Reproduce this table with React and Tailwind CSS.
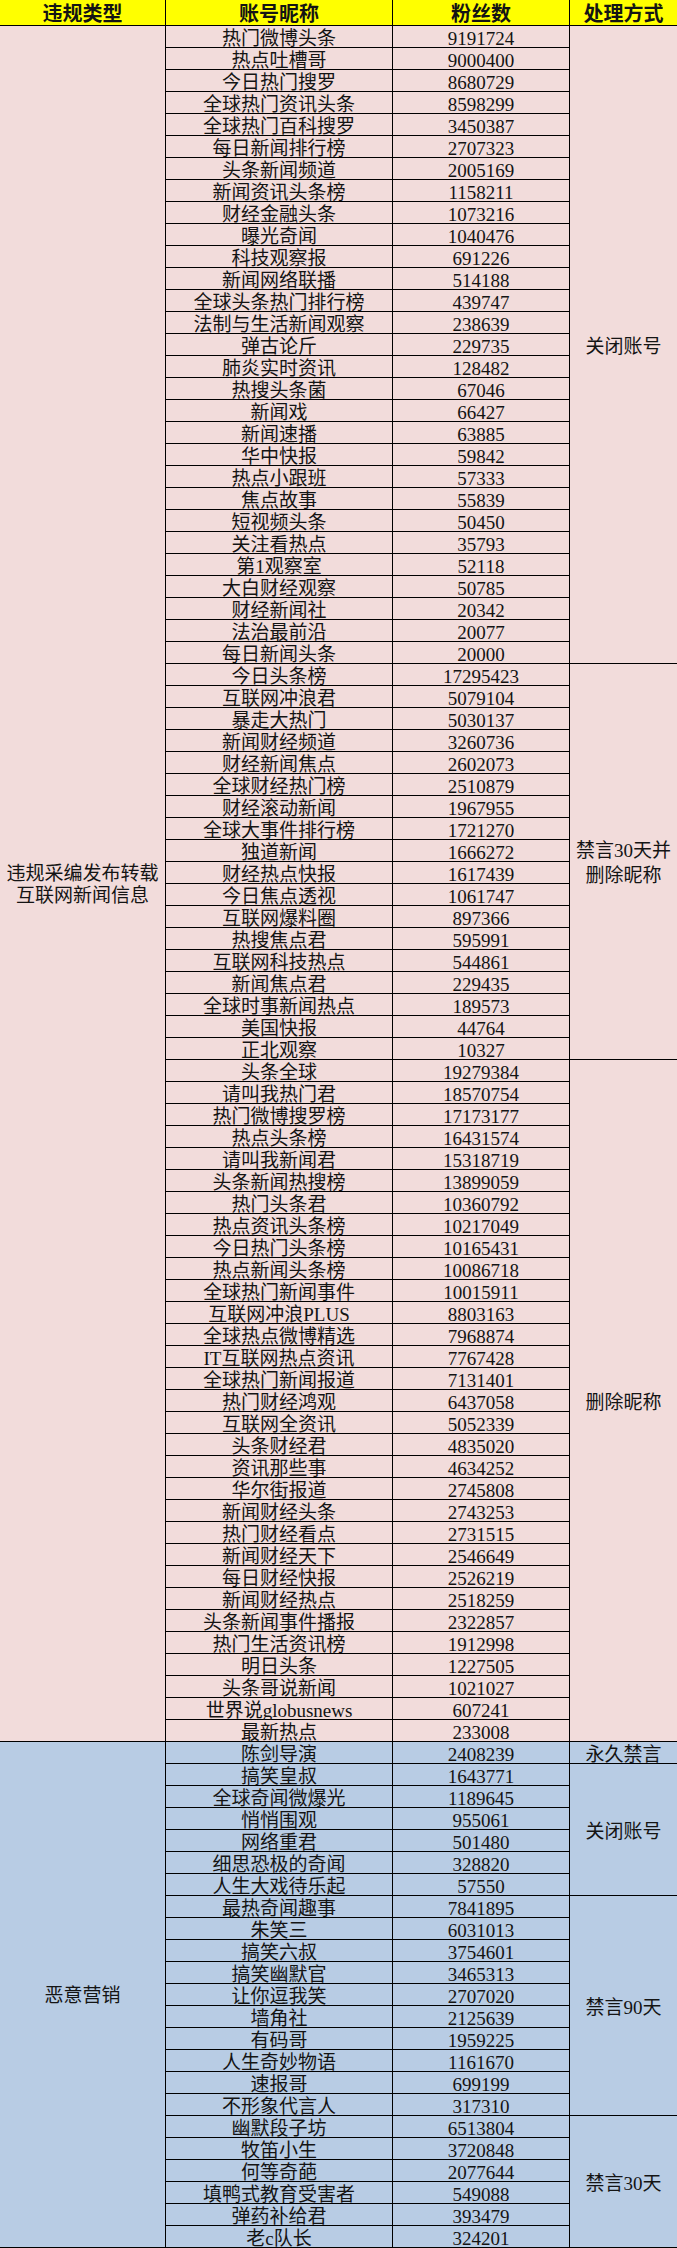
import React from "react";

const PINK = "bg-[#f2dcdb]";
const BLUE = "bg-[#b8cce4]";

// full class names so tailwind can see them
const SPAN = {
    1: "row-span-1",
    6: "row-span-6",
    10: "row-span-10",
    18: "row-span-18",
    23: "row-span-23",
    29: "row-span-29",
    31: "row-span-31",
    78: "row-span-78",
};

const sections = [
    {
        type: ["违规采编发布转载", "互联网新闻信息"],
        bg: PINK,
        groups: [
            {
                action: ["关闭账号"],
                rows: [
                    ["热门微博头条", "9191724"],
                    ["热点吐槽哥", "9000400"],
                    ["今日热门搜罗", "8680729"],
                    ["全球热门资讯头条", "8598299"],
                    ["全球热门百科搜罗", "3450387"],
                    ["每日新闻排行榜", "2707323"],
                    ["头条新闻频道", "2005169"],
                    ["新闻资讯头条榜", "1158211"],
                    ["财经金融头条", "1073216"],
                    ["曝光奇闻", "1040476"],
                    ["科技观察报", "691226"],
                    ["新闻网络联播", "514188"],
                    ["全球头条热门排行榜", "439747"],
                    ["法制与生活新闻观察", "238639"],
                    ["弹古论斤", "229735"],
                    ["肺炎实时资讯", "128482"],
                    ["热搜头条菌", "67046"],
                    ["新闻戏", "66427"],
                    ["新闻速播", "63885"],
                    ["华中快报", "59842"],
                    ["热点小跟班", "57333"],
                    ["焦点故事", "55839"],
                    ["短视频头条", "50450"],
                    ["关注看热点", "35793"],
                    ["第1观察室", "52118"],
                    ["大白财经观察", "50785"],
                    ["财经新闻社", "20342"],
                    ["法治最前沿", "20077"],
                    ["每日新闻头条", "20000"],
                ],
            },
            {
                action: ["禁言30天并", "删除昵称"],
                rows: [
                    ["今日头条榜", "17295423"],
                    ["互联网冲浪君", "5079104"],
                    ["暴走大热门", "5030137"],
                    ["新闻财经频道", "3260736"],
                    ["财经新闻焦点", "2602073"],
                    ["全球财经热门榜", "2510879"],
                    ["财经滚动新闻", "1967955"],
                    ["全球大事件排行榜", "1721270"],
                    ["独道新闻", "1666272"],
                    ["财经热点快报", "1617439"],
                    ["今日焦点透视", "1061747"],
                    ["互联网爆料圈", "897366"],
                    ["热搜焦点君", "595991"],
                    ["互联网科技热点", "544861"],
                    ["新闻焦点君", "229435"],
                    ["全球时事新闻热点", "189573"],
                    ["美国快报", "44764"],
                    ["正北观察", "10327"],
                ],
            },
            {
                action: ["删除昵称"],
                rows: [
                    ["头条全球", "19279384"],
                    ["请叫我热门君", "18570754"],
                    ["热门微博搜罗榜", "17173177"],
                    ["热点头条榜", "16431574"],
                    ["请叫我新闻君", "15318719"],
                    ["头条新闻热搜榜", "13899059"],
                    ["热门头条君", "10360792"],
                    ["热点资讯头条榜", "10217049"],
                    ["今日热门头条榜", "10165431"],
                    ["热点新闻头条榜", "10086718"],
                    ["全球热门新闻事件", "10015911"],
                    ["互联网冲浪PLUS", "8803163"],
                    ["全球热点微博精选", "7968874"],
                    ["IT互联网热点资讯", "7767428"],
                    ["全球热门新闻报道", "7131401"],
                    ["热门财经鸿观", "6437058"],
                    ["互联网全资讯", "5052339"],
                    ["头条财经君", "4835020"],
                    ["资讯那些事", "4634252"],
                    ["华尔街报道", "2745808"],
                    ["新闻财经头条", "2743253"],
                    ["热门财经看点", "2731515"],
                    ["新闻财经天下", "2546649"],
                    ["每日财经快报", "2526219"],
                    ["新闻财经热点", "2518259"],
                    ["头条新闻事件播报", "2322857"],
                    ["热门生活资讯榜", "1912998"],
                    ["明日头条", "1227505"],
                    ["头条哥说新闻", "1021027"],
                    ["世界说globusnews", "607241"],
                    ["最新热点", "233008"],
                ],
            },
        ],
    },
    {
        type: ["恶意营销"],
        bg: BLUE,
        groups: [
            { action: ["永久禁言"], rows: [["陈剑导演", "2408239"]] },
            {
                action: ["关闭账号"],
                rows: [
                    ["搞笑皇叔", "1643771"],
                    ["全球奇闻微爆光", "1189645"],
                    ["悄悄围观", "955061"],
                    ["网络重君", "501480"],
                    ["细思恐极的奇闻", "328820"],
                    ["人生大戏待乐起", "57550"],
                ],
            },
            {
                action: ["禁言90天"],
                rows: [
                    ["最热奇闻趣事", "7841895"],
                    ["朱笑三", "6031013"],
                    ["搞笑六叔", "3754601"],
                    ["搞笑幽默官", "3465313"],
                    ["让你逗我笑", "2707020"],
                    ["墙角社", "2125639"],
                    ["有码哥", "1959225"],
                    ["人生奇妙物语", "1161670"],
                    ["速报哥", "699199"],
                    ["不形象代言人", "317310"],
                ],
            },
            {
                action: ["禁言30天"],
                rows: [
                    ["幽默段子坊", "6513804"],
                    ["牧笛小生", "3720848"],
                    ["何等奇葩", "2077644"],
                    ["填鸭式教育受害者", "549088"],
                    ["弹药补给君", "393479"],
                    ["老c队长", "324201"],
                ],
            },
        ],
    },
];

function Cell({ bg, className = "", children }) {
    return (
        <div className={`${bg} flex items-center justify-center text-center whitespace-nowrap pt-[3px] ${className}`}>
            {children}
        </div>
    );
}

export default function App() {
    return (
        <div
            className="w-[677px] bg-black pb-px text-[19px] leading-[21px] text-[#141414]"
            style={{ fontFamily: '"Liberation Serif", "Noto Sans CJK SC", serif' }}
        >
            <div className="grid grid-cols-[165px_226px_176px_107px] grid-rows-[25px_repeat(101,21px)] gap-px">
                {/* Header */}
                {["违规类型", "账号昵称", "粉丝数", "处理方式"].map((h) => (
                    <Cell key={h} bg="bg-[#ffff00]" className="font-bold text-[20px]">
                        {h}
                    </Cell>
                ))}

                {sections.map((sec) => {
                    const total = sec.groups.reduce((n, g) => n + g.rows.length, 0);
                    return (
                        <React.Fragment key={sec.type[0]}>
                            <Cell bg={sec.bg} className={`${SPAN[total]} flex-col leading-[22px]`}>
                                {sec.type.map((t) => (
                                    <span key={t}>{t}</span>
                                ))}
                            </Cell>
                            {sec.groups.map((g, gi) =>
                                g.rows.map(([name, fans], i) => (
                                    <React.Fragment key={`${gi}-${name}`}>
                                        <Cell bg={sec.bg}>{name}</Cell>
                                        <Cell bg={sec.bg}>{fans}</Cell>
                                        {i === 0 && (
                                            <Cell bg={sec.bg} className={`${SPAN[g.rows.length]} flex-col leading-[25px]`}>
                                                {g.action.map((a) => (
                                                    <span key={a}>{a}</span>
                                                ))}
                                            </Cell>
                                        )}
                                    </React.Fragment>
                                ))
                            )}
                        </React.Fragment>
                    );
                })}
            </div>
        </div>
    );
}
